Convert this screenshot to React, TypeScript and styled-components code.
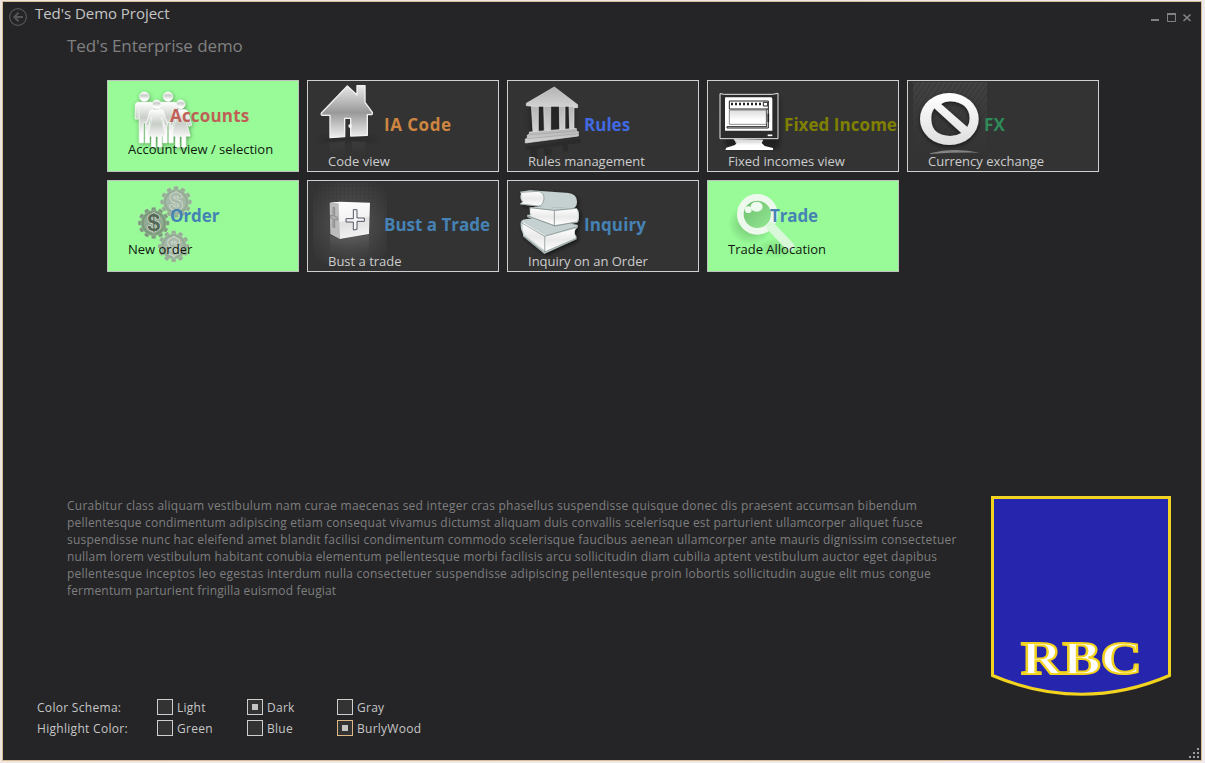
import React from 'react';
import styled, { createGlobalStyle } from 'styled-components';

const GlobalStyle = createGlobalStyle`
  * { box-sizing: border-box; }
  body { margin: 0; background: #efeaea; }
`;

const Desktop = styled.div`
  width: 1205px;
  height: 763px;
  padding: 1px 3px 2px 2px;
  background: linear-gradient(90deg, #eee6df, #eeebee);
  overflow: hidden;
`;

const Window = styled.main`
  position: relative;
  height: 760px;
  display: flex;
  flex-direction: column;
  border: 1px solid #d9bd98;
  background: #252527;
  color: #c6c6c6;
  font-family: "Open Sans", "Noto Sans", sans-serif;
`;

const TitleBar = styled.header`
  display: flex;
  align-items: flex-start;
  height: 32px;
  padding: 0 9px 0 5px;
`;

const BackButton = styled.button`
  width: 20px;
  height: 20px;
  margin-top: 5px;
  padding: 0;
  border: 0;
  background: none;
  svg { display: block; }
`;

const WindowTitle = styled.h1`
  flex: 1;
  margin: 0 0 0 7px;
  font-size: 15px;
  line-height: 22px;
  letter-spacing: -0.04px;
  font-weight: 400;
`;

const Controls = styled.div`
  margin-top: 9px;
  width: 42px;
  height: 14px;
  svg { display: block; }
`;

const Subtitle = styled.h2`
  margin: 0 0 0 64px;
  height: 46px;
  font-size: 17px;
  line-height: 24px;
  letter-spacing: -0.09px;
  font-weight: 400;
  color: #808081;
`;

const Tiles = styled.section`
  display: grid;
  grid-template-columns: repeat(5, 192px);
  grid-auto-rows: 92px;
  gap: 8px;
  margin-left: 104px;
`;

const Tile = styled.button<{ $active?: boolean }>`
  position: relative;
  display: flex;
  flex-direction: column;
  align-items: flex-start;
  justify-content: flex-start;
  padding: ${p => (p.$active ? '22px 0 0 20px' : '31px 0 0 20px')};
  border: 1px solid ${p => (p.$active ? '#bcc4bc' : '#cfcfcf')};
  background: ${p => (p.$active ? '#98fb98' : '#333334')};
  color: ${p => (p.$active ? '#101810' : '#cdcdcd')};
  font-family: inherit;
  text-align: left;
  overflow: hidden;
`;

const Art = styled.svg`
  position: absolute;
  left: -1px;
  top: -1px;
  width: 192px;
  height: 92px;
`;

const TileTitle = styled.span<{ $color: string; $active?: boolean; $spacing: number }>`
  position: relative;
  margin-left: ${p => (p.$active ? 42 : 56)}px;
  font-size: 17px;
  line-height: 26px;
  font-weight: 700;
  letter-spacing: ${p => p.$spacing}px;
  white-space: nowrap;
  color: ${p => p.$color};
`;

const TileText = styled.span<{ $active?: boolean }>`
  position: relative;
  margin-top: ${p => (p.$active ? 10 : 13)}px;
  font-size: 13px;
  line-height: 20px;
  white-space: nowrap;
`;

const Lower = styled.section`
  display: flex;
  justify-content: space-between;
  height: 200px;
  margin: 224px 30px 0 64px;
`;

const Description = styled.p`
  margin: 0;
  padding-top: 1px;
  font-size: 12px;
  line-height: 17px;
  color: #7e7e7f;
  white-space: nowrap;
`;

const Line = styled.span<{ $spacing: number }>`
  display: block;
  letter-spacing: ${p => p.$spacing}px;
`;

const Logo = styled.svg`
  display: block;
  width: 180px;
  height: 200px;
`;

const Settings = styled.form`
  display: grid;
  grid-template-columns: 120px 90px 90px 100px;
  grid-auto-rows: 21px;
  margin: 1px 0 0 34px;
`;

const Label = styled.span`
  font-size: 12px;
  line-height: 21px;
  letter-spacing: 0.3px;
  white-space: nowrap;
`;

const Option = styled.label`
  display: flex;
  align-items: flex-start;
  gap: 4px;
  font-size: 12px;
  line-height: 21px;
  letter-spacing: 0.26px;
`;

const Check = styled.span<{ $highlight?: boolean }>`
  display: grid;
  place-items: center;
  width: 16px;
  height: 16px;
  margin-top: 2px;
  border: 1px solid ${p => (p.$highlight ? '#deb887' : '#cfcfcf')};
  background: #333334;
`;

const Mark = styled.span`
  width: 6px;
  height: 6px;
  background: #c4c4c4;
`;

const Grip = styled.svg`
  position: absolute;
  right: 1px;
  bottom: 1px;
  width: 12px;
  height: 12px;
`;

const Man = ({ x, y }: { x: number; y: number }) => (
  <g transform={`translate(${x} ${y})`}>
    <circle cx="0" cy="-30" r="14" />
    <path d="M-20-13H20Q27-12 27-4V37H18V8H15V108H3V48H-3V108H-15V8H-18V37H-27V-4Q-27-12-20-13Z" />
  </g>
);

const Woman = ({ x, y }: { x: number; y: number }) => (
  <g transform={`translate(${x} ${y})`}>
    <circle cx="0" cy="-30" r="13" />
    <path d="M-13-14H13Q19-13 21-7L33 32 25 36 16 9 14 12 28 65H15V98H4V66H-4V98H-15V65H-28L-14 12-16 9-25 36-33 32-21-7Q-19-13-13-14Z" />
  </g>
);

const AccountsArt = () => (
  <Art viewBox="21 18 576 276">
    <defs>
      <linearGradient id="people" x1="0" y1="0" x2="0" y2="1">
        <stop offset="0" stopColor="#fff" />
        <stop offset=".38" stopColor="#c9cec9" />
        <stop offset=".8" stopColor="#fff" />
      </linearGradient>
      <filter id="peopleShade" x="-20%" y="-20%" width="140%" height="140%">
        <feDropShadow dx="2" dy="4" stdDeviation="7" floodColor="#355c35" floodOpacity=".65" />
      </filter>
    </defs>
    <g filter="url(#peopleShade)" fill="url(#people)" stroke="#fff" strokeWidth="2">
      <Man x={133} y={98} />
      <Man x={204} y={98} />
      <Woman x={170} y={121} />
      <Woman x={242} y={121} />
    </g>
  </Art>
);

const HouseArt = () => (
  <Art viewBox="21 18 576 276">
    <defs>
      <linearGradient id="house" x1="0" y1="0" x2="0" y2="1">
        <stop offset="0" stopColor="#e8e8e8" />
        <stop offset=".52" stopColor="#999" />
        <stop offset="1" stopColor="#f0f0f0" />
      </linearGradient>
      <linearGradient id="houseMirror" x1="0" y1="0" x2="0" y2="1">
        <stop offset="0" stopColor="#555" stopOpacity=".3" />
        <stop offset="1" stopColor="#444" stopOpacity="0" />
      </linearGradient>
      <filter id="soft" x="-20%" y="-200%" width="140%" height="500%"><feGaussianBlur stdDeviation="6" /></filter>
    </defs>
    <ellipse cx="145" cy="196" rx="88" ry="7" fill="#1b1b1b" opacity=".4" filter="url(#soft)" />
    <path d="M88 206L134 202V250H94ZM155 202L196 204V248H158Z" fill="url(#houseMirror)" />
    <path d="M142 36L171 63V35H195V85L217 115Q219 123 210 122H202V184L152 186V133H134V188L90 191V124H67Q61 122 65 116Z" fill="url(#house)" stroke="#f1f1f1" strokeWidth="4" strokeLinejoin="round" />
    <circle cx="151" cy="156" r="6" fill="#eee" />
  </Art>
);

const BankArt = () => (
  <Art viewBox="21 18 576 276">
    <defs>
      <linearGradient id="bank" x1="0" y1="0" x2="0" y2="1">
        <stop offset="0" stopColor="#b3b3b3" />
        <stop offset="1" stopColor="#d4d4d4" />
      </linearGradient>
      <filter id="bankBlur"><feGaussianBlur stdDeviation="6" /></filter>
    </defs>
    <path d="M88 95H226V190L88 200Z" fill="#1b1b1b" opacity=".6" filter="url(#bankBlur)" />
    <path d="M90 226H112V252H94ZM132 222H155V243H134ZM188 214H204V232H190ZM75 218L240 196 245 206 82 229Z" fill="#232324" opacity=".5" />
    <path d="M115 98V170L130 169V98ZM151 98V168L178 166V98ZM195 98V164L207 163V98Z" fill="#252525" />
    <g fill="url(#bank)" stroke="#dedede" strokeWidth="2" strokeLinejoin="round">
      <path d="M94 92H115V177H99ZM131 92H152V175H133ZM178 92H195V171H179ZM207 92H222V168H209Z" />
      <path d="M163 39L233 92V101H222V97H99L79 95V88Z" />
      <path d="M88 174L229 163V171L235 173V186L76 207V195L82 193V183L88 181Z" />
    </g>
    <path d="M88 182L229 171M82 194L234 179" stroke="#a5a5a5" strokeWidth="2" />
  </Art>
);

const MonitorArt = () => (
  <Art viewBox="21 18 576 276">
    <defs>
      <linearGradient id="stand" x1="0" y1="0" x2="0" y2="1">
        <stop offset="0" stopColor="#d2d2d2" />
        <stop offset=".6" stopColor="#fff" />
      </linearGradient>
      <linearGradient id="page" x1="0" y1="0" x2="0" y2="1">
        <stop offset="0" stopColor="#dcdcdc" />
        <stop offset=".7" stopColor="#fff" />
      </linearGradient>
      <filter id="monitorShade"><feGaussianBlur stdDeviation="7" /></filter>
    </defs>
    <path d="M65 75H238V222H80Z" fill="#181818" opacity=".65" filter="url(#monitorShade)" />
    <path d="M60 59L73 61H217L234 58V194H60Z" fill="#2c2c2c" stroke="#e7e7e7" strokeWidth="3" />
    <path d="M77 70H213Q217 70 217 75V170H75V74Q75 70 77 70Z" fill="#fff" />
    <path d="M88 81H205V162H81V158H200V106L205 104M88 81V105H202" fill="none" stroke="#242424" strokeWidth="3" />
    <path d="M93 90H184" stroke="#222" strokeWidth="7" strokeDasharray="6 6" />
    <path d="M190 85H203V96H190Z" fill="#fff" stroke="#222" strokeWidth="3" />
    <path d="M88 108H199V151H88Z" fill="url(#page)" stroke="#555" strokeWidth="2" />
    <path d="M205 119V144" stroke="#222" strokeWidth="5" />
    <path d="M203 184H217" stroke="#fff" strokeWidth="5" />
    <path d="M100 195L190 197 185 207 194 216 219 222V228H76L79 221 105 213 110 206Z" fill="url(#stand)" />
    <path d="M104 199H184M105 204H180" stroke="#ddd" strokeWidth="3" />
  </Art>
);

const ForbiddenArt = () => (
  <Art viewBox="21 18 576 276">
    <defs>
      <linearGradient id="panel" x1="0" y1="0" x2="0" y2="1">
        <stop offset="0" stopColor="#424243" />
        <stop offset=".6" stopColor="#373738" />
        <stop offset="1" stopColor="#333334" />
      </linearGradient>
      <pattern id="stripe" width="13" height="13" patternUnits="userSpaceOnUse" patternTransform="rotate(35)">
        <path d="M0 0V13" stroke="#232323" strokeWidth="5" />
      </pattern>
      <linearGradient id="fade" x1="0" y1="0" x2="0" y2="1">
        <stop offset="0" stopColor="#fff" />
        <stop offset="1" stopColor="#000" />
      </linearGradient>
      <mask id="stripeMask"><path d="M39 24H261V250H39Z" fill="url(#fade)" /></mask>
      <linearGradient id="ring" x1="0" y1="0" x2="0" y2="1">
        <stop offset="0" stopColor="#fff" />
        <stop offset="1" stopColor="#dedede" />
      </linearGradient>
      <filter id="ringShade" x="-20%" y="-20%" width="140%" height="150%">
        <feDropShadow dx="0" dy="5" stdDeviation="7" floodColor="#000" floodOpacity=".55" />
      </filter>
    </defs>
    <path d="M39 24H261V250H39Z" fill="url(#panel)" />
    <path d="M39 24H261V250H39Z" fill="url(#stripe)" opacity=".4" mask="url(#stripeMask)" />
    <path d="M90 238Q160 219 239 236Q165 235 90 240Z" fill="#858585" />
    <path filter="url(#ringShade)" fill="url(#ring)" fillRule="evenodd" d="M60 135A88 78 0 1 1 236 135A88 78 0 1 1 60 135ZM103 103Q92 118 94 139Q97 185 151 186Q171 185 184 177ZM123 90L202 159Q209 147 209 132Q207 86 151 82Q134 82 123 90Z" />
  </Art>
);

const gearTeeth = Array.from({ length: 12 }, (_, i) => i * 30);

const Gear = ({ x, y, dark }: { x: number; y: number; dark?: boolean }) => (
  <g transform={`translate(${x} ${y})`}>
    <g fill={dark ? '#7b997b' : '#94ab94'} stroke="#c1e3c1" strokeWidth="1">
      {gearTeeth.map(a => <path key={a} transform={`rotate(${a})`} d="M-6-47H6L8-34H-8Z" />)}
      <circle r="38" />
    </g>
    <circle r="30" fill={dark ? '#91aa91' : '#a6b8a6'} />
    <text y="25" textAnchor="middle" fontFamily="Liberation Sans" fontSize="70" fontWeight="700" fill={dark ? '#566856' : '#a9b9a9'} stroke="#e4f0e4" strokeWidth="3" paintOrder="stroke">$</text>
  </g>
);

const GearsArt = () => (
  <Art viewBox="21 18 576 276">
    <Gear x={228} y={84} />
    <Gear x={221} y={217} />
    <Gear x={161} y={147} dark />
  </Art>
);

const CubeArt = () => (
  <Art viewBox="21 18 576 276">
    <defs>
      <radialGradient id="cubePanel" cx=".5" cy=".5" r=".65">
        <stop offset="0" stopColor="#565657" />
        <stop offset="1" stopColor="#333334" />
      </radialGradient>
      <pattern id="mesh" width="12" height="12" patternUnits="userSpaceOnUse">
        <path d="M0 0H12M0 0V12" stroke="#292929" strokeWidth="3" />
      </pattern>
      <linearGradient id="meshFade" x1="0" y1="0" x2="0" y2="1">
        <stop offset="0" stopColor="#fff" />
        <stop offset=".5" stopColor="#000" />
      </linearGradient>
      <mask id="meshMask"><path d="M39 24H261V270H39Z" fill="url(#meshFade)" /></mask>
      <linearGradient id="front" x1="0" y1="0" x2=".2" y2="1">
        <stop offset="0" stopColor="#fff" />
        <stop offset=".55" stopColor="#f3f3f3" />
        <stop offset=".6" stopColor="#dfdfdf" />
        <stop offset="1" stopColor="#f1f1f1" />
      </linearGradient>
      <linearGradient id="cubeMirror" x1="0" y1="0" x2="0" y2="1">
        <stop offset="0" stopColor="#777" stopOpacity=".4" />
        <stop offset="1" stopColor="#444" stopOpacity="0" />
      </linearGradient>
    </defs>
    <path d="M39 24H261V270H39Z" fill="url(#cubePanel)" />
    <path d="M39 24H261V270H39Z" fill="url(#mesh)" opacity=".35" mask="url(#meshMask)" />
    <path d="M90 185L118 196 207 183V230L118 250 92 235Z" fill="url(#cubeMirror)" />
    <path d="M89 86L120 84 119 195 91 180Z" fill="#bcbcbc" />
    <path d="M89 86L120 83 210 86 207 180 119 195 116 88Z" fill="url(#front)" />
    <path d="M99 100L104 101V127L113 130V138L104 136V161L99 159V135L91 132V124L99 126Z" fill="#b0b0b0" stroke="#777" strokeWidth="2" />
    <path d="M160 107H171V132H193V142H171V166L160 168V144H138V134H160Z" fill="#f5f5f5" stroke="#35394a" strokeWidth="2.5" />
  </Art>
);

const BooksArt = () => (
  <Art viewBox="21 18 576 276">
    <defs>
      <linearGradient id="sheet" x1="0" y1="0" x2="0" y2="1">
        <stop offset="0" stopColor="#fff" />
        <stop offset=".5" stopColor="#eaeaea" />
        <stop offset="1" stopColor="#fff" />
      </linearGradient>
      <filter id="bookShade" x="-20%" y="-20%" width="150%" height="140%">
        <feDropShadow dx="5" dy="5" stdDeviation="6" floodColor="#000" floodOpacity=".6" />
      </filter>
    </defs>
    <g filter="url(#bookShade)" strokeLinejoin="round">
      <path d="M62 150Q61 138 76 136L115 131 233 153V160L226 167Q220 176 229 187V196L133 239Q114 224 69 187V179Q61 165 62 150Z" fill="#c5d1d0" />
      <path d="M69 145L137 185V231L74 183Q65 164 69 145Z" fill="url(#sheet)" />
      <path d="M137 187L226 164Q220 178 227 192L137 231Z" fill="url(#sheet)" />
      <path d="M64 146L134 187 232 158M69 185L132 235 230 193M134 187V235" fill="none" stroke="#7d8b8a" strokeWidth="2" />
      <path d="M89 100L126 98 228 102Q238 107 237 129Q237 143 230 146L166 158 82 129V122H90Z" fill="#c5d1d0" />
      <path d="M94 103L163 110V153L87 126 96 123Q87 114 94 103Z" fill="url(#sheet)" />
      <path d="M163 111L230 104Q239 129 229 143L163 153Z" fill="url(#sheet)" />
      <path d="M90 101L162 109 228 103M163 110V156M84 126L165 156 229 144" fill="none" stroke="#6f7a79" strokeWidth="2" />
      <path d="M60 53L90 49 205 57Q231 61 231 83Q231 98 218 103L118 98 59 91L67 83Q58 73 63 59Z" fill="#c5d1d0" />
      <path d="M65 55L115 52Q133 55 132 75Q129 94 116 96L62 90 71 84Q61 70 65 55Z" fill="url(#sheet)" />
      <path d="M63 55L115 52Q133 55 132 75Q129 94 116 96L62 90" fill="none" stroke="#7f8a89" strokeWidth="2" />
    </g>
  </Art>
);

const MagnifierArt = () => (
  <Art viewBox="21 18 576 276">
    <defs>
      <radialGradient id="glassShade" cx=".5" cy=".5" r=".5">
        <stop offset="0" stopColor="#5da45d" stopOpacity=".75" />
        <stop offset="1" stopColor="#5da45d" stopOpacity="0" />
      </radialGradient>
      <linearGradient id="lens" x1="0" y1="0" x2="1" y2="1">
        <stop offset="0" stopColor="#69b969" />
        <stop offset="1" stopColor="#98ed98" />
      </linearGradient>
    </defs>
    <ellipse cx="152" cy="150" rx="68" ry="62" fill="url(#glassShade)" />
    <ellipse cx="230" cy="223" rx="66" ry="30" fill="url(#glassShade)" opacity=".5" />
    <circle cx="172" cy="121" r="51" fill="url(#lens)" stroke="#edf9ed" strokeWidth="20" />
    <path d="M213 158L270 218" stroke="#d9f8d9" strokeWidth="27" strokeLinecap="round" />
    <ellipse cx="170" cy="98" rx="18" ry="15" fill="#f0fbf0" />
    <circle cx="145" cy="107" r="10" fill="#f0fbf0" />
  </Art>
);

const tiles: { title: string; text: string; color: string; spacing: number; active?: boolean; Picture: React.FC }[] = [
  { title: 'Accounts', text: 'Account view / selection', color: '#bf6057', spacing: 0.18, active: true, Picture: AccountsArt },
  { title: 'IA Code', text: 'Code view', color: '#cd853f', spacing: 0.5, Picture: HouseArt },
  { title: 'Rules', text: 'Rules management', color: '#4169e1', spacing: 0, Picture: BankArt },
  { title: 'Fixed Incomes', text: 'Fixed incomes view', color: '#808000', spacing: 0.05, Picture: MonitorArt },
  { title: 'FX', text: 'Currency exchange', color: '#2e8b57', spacing: 0.1, Picture: ForbiddenArt },
  { title: 'Order', text: 'New order', color: '#4682b4', spacing: -0.1, active: true, Picture: GearsArt },
  { title: 'Bust a Trade', text: 'Bust a trade', color: '#4682b4', spacing: 0, Picture: CubeArt },
  { title: 'Inquiry', text: 'Inquiry on an Order', color: '#4682b4', spacing: 0.1, Picture: BooksArt },
  { title: 'Trade', text: 'Trade Allocation', color: '#4682b4', spacing: -0.12, active: true, Picture: MagnifierArt },
];

const lines: [string, number][] = [
  ['Curabitur class aliquam vestibulum nam curae maecenas sed integer cras phasellus suspendisse quisque donec dis praesent accumsan bibendum', 0.242],
  ['pellentesque condimentum adipiscing etiam consequat vivamus dictumst aliquam duis convallis scelerisque est parturient ullamcorper aliquet fusce', 0.195],
  ['suspendisse nunc hac eleifend amet blandit facilisi condimentum commodo scelerisque faucibus aenean ullamcorper ante mauris dignissim consectetuer', 0.213],
  ['nullam lorem vestibulum habitant conubia elementum pellentesque morbi facilisis arcu sollicitudin diam cubilia aptent vestibulum auctor eget dapibus', 0.192],
  ['pellentesque inceptos leo egestas interdum nulla consectetuer suspendisse adipiscing pellentesque proin lobortis sollicitudin augue elit mus congue', 0.245],
  ['fermentum parturient fringilla euismod feugiat', 0.165],
];

const settings = [
  { label: 'Color Schema:', options: ['Light', 'Dark', 'Gray'], selected: 'Dark' },
  { label: 'Highlight Color:', options: ['Green', 'Blue', 'BurlyWood'], selected: 'BurlyWood' },
];

export default function App() {
  return (
    <>
      <GlobalStyle />
      <Desktop>
        <Window>
          <TitleBar>
            <BackButton aria-label="Back">
              <svg width="20" height="20" viewBox="0 0 20 20" fill="none" stroke="#555557">
                <circle cx="10" cy="10" r="8.4" strokeWidth="1.2" />
                <path d="M15 10H7M10.5 5.8L6.3 10l4.2 4.2" strokeWidth="2" />
              </svg>
            </BackButton>
            <WindowTitle>Ted's Demo Project</WindowTitle>
            <Controls>
              <svg width="42" height="14" viewBox="0 0 42 14" fill="none" stroke="#818182">
                <path d="M1 9H9" strokeWidth="2" />
                <path d="M17.5 3V10.5H25.5V3" />
                <path d="M17 3H26" strokeWidth="2" />
                <path d="M33.5 3.5L40.5 10M40.5 3.5L33.5 10" strokeWidth="1.7" />
              </svg>
            </Controls>
          </TitleBar>
          <Subtitle>Ted's Enterprise demo</Subtitle>
          <Tiles>
            {tiles.map(({ title, text, color, spacing, active, Picture }) => (
              <Tile key={title} $active={active}>
                <Picture />
                <TileTitle $color={color} $active={active} $spacing={spacing}>{title}</TileTitle>
                <TileText $active={active}>{text}</TileText>
              </Tile>
            ))}
          </Tiles>
          <Lower>
            <Description>
              {lines.map(([line, spacing]) => (
                <Line key={line} $spacing={spacing}>{line}</Line>
              ))}
            </Description>
            <Logo viewBox="0 0 180 200">
              <path d="M1.5 1.5H178.5V179.5Q91 217 1.5 179.5Z" fill="#2525ae" stroke="#f2d31f" strokeWidth="3" />
              <text x="30" y="177.5" textLength="121" lengthAdjust="spacingAndGlyphs" fontFamily="Liberation Serif, serif" fontSize="46" fontWeight="700" fill="#fff" stroke="#f2d31f" strokeWidth="2">RBC</text>
            </Logo>
          </Lower>
          <Settings>
            {settings.map(({ label, options, selected }) => (
              <React.Fragment key={label}>
                <Label>{label}</Label>
                {options.map(option => (
                  <Option key={option}>
                    <Check $highlight={option === 'BurlyWood'}>{option === selected && <Mark />}</Check>
                    {option}
                  </Option>
                ))}
              </React.Fragment>
            ))}
          </Settings>
          <Grip viewBox="0 0 12 12" fill="#9c9c9c">
            <path d="M9 1h2v2H9zM5 5h2v2H5zM9 5h2v2H9zM1 9h2v2H1zM5 9h2v2H5zM9 9h2v2H9z" />
          </Grip>
        </Window>
      </Desktop>
    </>
  );
}
